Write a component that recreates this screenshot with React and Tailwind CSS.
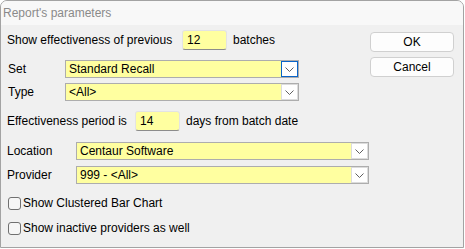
import React from 'react';

const Chevron = () => (
  <svg width="9" height="5" viewBox="0 0 9 5" fill="none">
    <path d="M0.5 0.5 L4.5 4.5 L8.5 0.5" stroke="#606060" strokeWidth="1" />
  </svg>
);

const Combo = ({ value, width, focused }) => (
  <div className={`flex h-[18px] border border-[#adadad] bg-[#ffffa0] ${width}`}>
    <span className="flex-1 pl-[3px] leading-[16px] truncate">{value}</span>
    <div
      className={`w-[17px] h-full flex items-center justify-center bg-white border ${
        focused ? 'border-[#0a64c8]' : 'border-[#dcdcdc]'
      }`}
    >
      <Chevron />
    </div>
  </div>
);

const NumBox = ({ value }) => (
  <div className="w-[45px] h-[20px] bg-[#ffffa0] border border-[#e3e3e3] border-b-[#8c8c8c] rounded-[3px] pl-[4px] leading-[18px]">
    {value}
  </div>
);

const Check = ({ label }) => (
  <div className="flex items-center h-[13px]">
    <div className="w-[13px] h-[13px] ml-[1px] border border-[#707070] rounded-[3px] bg-[#f6f6f6]" />
    <span className="ml-[2px] leading-[13px]">{label}</span>
  </div>
);

export default function App() {
  return (
    <div className="w-[465px] h-[249px] bg-white font-['Liberation_Sans',Arial,sans-serif] text-[12px] text-black">
      <div className="w-[464px] h-[248px] border border-[#a3a3a3] rounded-t-[7px] overflow-hidden flex flex-col bg-[#f0f0f0]">
        {/* title bar */}
        <div className="h-[24px] bg-[#f8f8f8] pl-[2px] flex items-center text-[#8a8a8a]">
          Report's parameters
        </div>

        <div className="flex flex-1">
          {/* left column */}
          <div className="flex-1 pl-[6px] flex flex-col">
            <div className="mt-[5px] h-[20px] flex items-center">
              <span className="w-[175px]">Show effectiveness of previous</span>
              <NumBox value="12" />
              <span className="ml-[6px]">batches</span>
            </div>

            <div className="mt-[10px] flex items-center">
              <span className="w-[58px] pl-[1px]">Set</span>
              <Combo value="Standard Recall" width="w-[234px]" focused />
            </div>

            <div className="mt-[5px] flex items-center">
              <span className="w-[58px] pl-[1px]">Type</span>
              <Combo value="<All>" width="w-[234px]" />
            </div>

            <div className="mt-[10px] h-[20px] flex items-center">
              <span className="w-[128px]">Effectiveness period is</span>
              <NumBox value="14" />
              <span className="ml-[6px]">days from batch date</span>
            </div>

            <div className="mt-[11px] flex items-center">
              <span className="w-[69px]">Location</span>
              <Combo value="Centaur Software" width="w-[293px]" />
            </div>

            <div className="mt-[6px] flex items-center">
              <span className="w-[69px]">Provider</span>
              <Combo value="999 - <All>" width="w-[293px]" />
            </div>

            <div className="mt-[13px]">
              <Check label="Show Clustered Bar Chart" />
            </div>
            <div className="mt-[12px]">
              <Check label="Show inactive providers as well" />
            </div>
          </div>

          {/* buttons */}
          <div className="w-[84px] mr-[9px] pt-[7px] flex flex-col gap-[5px]">
            <button className="h-[20px] bg-[#fdfdfd] border border-[#d0d0d0] rounded-[4px]">OK</button>
            <button className="h-[20px] bg-[#fdfdfd] border border-[#d0d0d0] rounded-[4px]">Cancel</button>
          </div>
        </div>
      </div>
    </div>
  );
}
